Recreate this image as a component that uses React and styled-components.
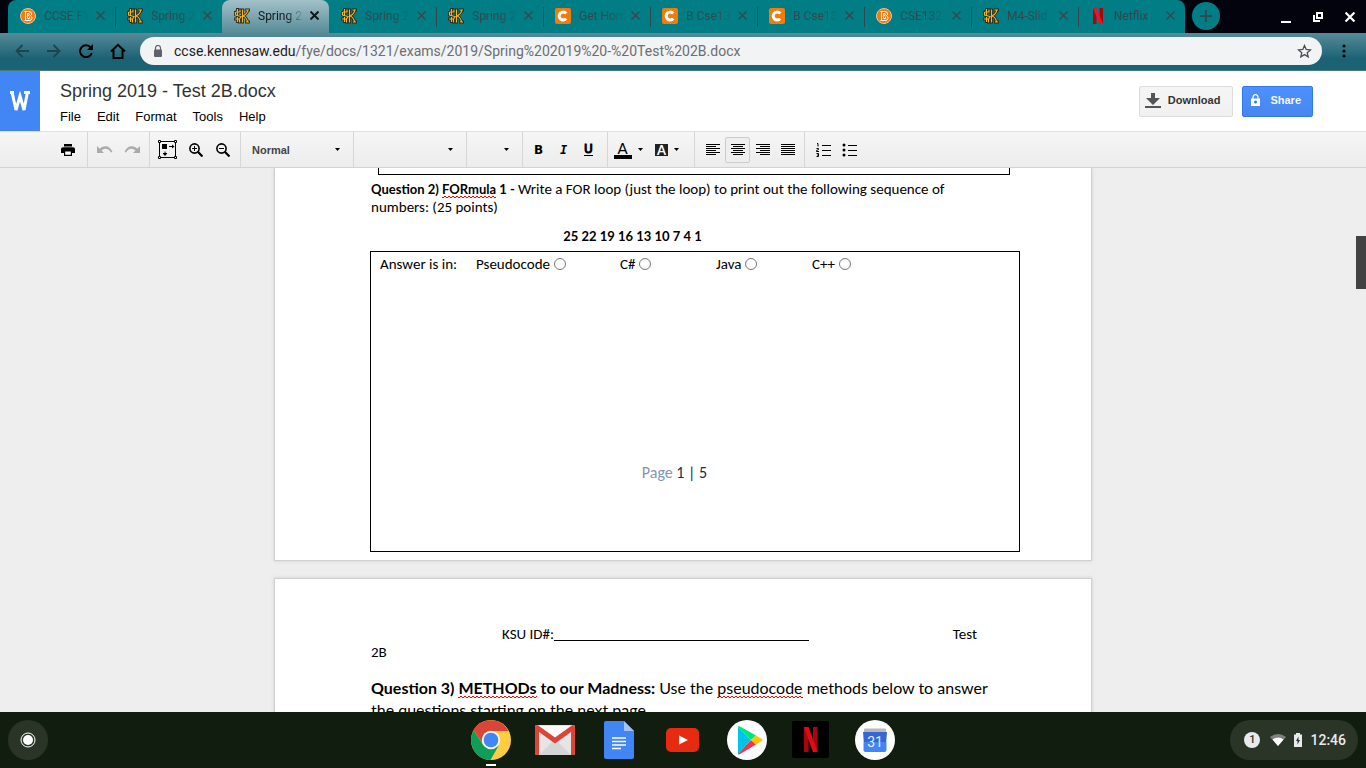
import React from "react";
import styled, { createGlobalStyle, css } from "styled-components";

const Global = createGlobalStyle`
  * { box-sizing: border-box; }
  body { margin: 0; background: #eee; font-family: "Liberation Sans", Arial, sans-serif; }
  button, input, select { font: inherit; margin: 0; }
  button { padding: 0; border: 0; background: none; color: inherit; }
  svg { display: block; flex: none; }
`;

const Screen = styled.div`
  height: 100vh;
  display: flex;
  flex-direction: column;
  overflow: hidden;
`;

/* ---------- browser frame ---------- */

const TabStrip = styled.div`
  display: flex;
  height: 33px;
  flex: none;
  padding-left: 8px;
  background: #02030d;
  font-family: Roboto, sans-serif;
`;

const Tabs = styled.div`
  display: flex;
  flex: 0 1 1177px;
  min-width: 0;
  background: #007d85;
  border-radius: 8px 8px 0 0;
`;

const Tab = styled.div`
  display: flex;
  align-items: center;
  flex: 1 1 0;
  min-width: 0;
  height: 33px;
  padding: 0 7px 2px 12px;
  color: #36474c;
  border-radius: 8px 8px 0 0;
  ${(p) =>
    p.$active &&
    css`
      color: #10181b;
      background: linear-gradient(#a3c1c9, #568b98);
    `}
`;

const Divider = styled.i`
  align-self: center;
  width: 1px;
  height: 20px;
  margin: 0 -1px 0 0;
  background: ${(p) => (p.$hidden ? "transparent" : "#34474d")};
`;

const TabLabel = styled.span`
  flex: 1;
  min-width: 0;
  margin: 0 0 0 8px;
  white-space: nowrap;
  font-size: 12px;
  line-height: 16px;
  mask-image: ${(p) => (p.$whole ? "none" : "linear-gradient(to right, #000 28px, transparent 46px)")};
`;

const CloseButton = styled.button`
  display: grid;
  place-items: center;
  width: 16px;
  height: 16px;
  flex: none;
`;

const NewTab = styled.button`
  display: grid;
  place-items: center;
  width: 28px;
  height: 28px;
  margin: 2px 0 0 7px;
  border-radius: 50%;
  background: #007d85;
  color: #304a4f;
`;

const WindowButtons = styled.div`
  display: flex;
  gap: 16px;
  margin: 9px 8px 0 auto;
  color: #fff;
`;

const NavBar = styled.nav`
  display: flex;
  align-items: center;
  height: 38px;
  flex: none;
  padding: 0 14px 2px;
  background: linear-gradient(#568b98, #1b6274 70%);
  border-bottom: 1px solid #487b7b;
  color: #000;
`;

const NavButton = styled.button`
  display: grid;
  place-items: center;
  width: 16px;
  height: 24px;
  margin-right: 16px;
  color: ${(p) => (p.disabled ? "#1d454f" : "#000")};
`;

const MenuButton = styled(NavButton)`
  margin: 0 0 0 14px;
`;

const Omnibox = styled.div`
  display: flex;
  align-items: center;
  flex: 1;
  height: 28px;
  padding: 0 10px 0 12px;
  margin-left: -2px;
  border-radius: 14px;
  background: #f1f3f4;
  color: #5f6368;
  font-family: Roboto, sans-serif;
  font-size: 14px;
`;

const Url = styled.a`
  flex: 1;
  margin-left: 10px;
  color: #6b6e72;
  text-decoration: none;
  white-space: nowrap;
  overflow: hidden;
  b { font-weight: 400; color: #202124; }
`;

/* ---------- document header ---------- */

const Header = styled.header`
  display: flex;
  height: 60px;
  flex: none;
  background: #fff;
`;

const Logo = styled.div`
  display: grid;
  place-items: center;
  width: 40px;
  background: #4285f4;
`;

const TitleBlock = styled.div`
  flex: 1;
  padding: 10px 0 0 20px;
`;

const Title = styled.h1`
  margin: 0;
  font-size: 18px;
  line-height: 20px;
  font-weight: 400;
  color: #333;
`;

const Menu = styled.div`
  display: flex;
  gap: 16px;
  margin-top: 8px;
  font-size: 13px;
  line-height: 16px;
  color: #000;
`;

const Actions = styled.div`
  display: flex;
  gap: 9px;
  padding: 15px 53px 0 0;
`;

const ActionButton = styled.button`
  display: flex;
  align-items: center;
  height: 31px;
  padding: 0 ${(p) => (p.$primary ? "11px" : "12px")} 3px ${(p) => (p.$primary ? "8px" : "5px")};
  gap: ${(p) => (p.$primary ? "10px" : "7px")};
  border: 1px solid ${(p) => (p.$primary ? "#3079ed" : "#dcdcdc")};
  border-radius: 2px;
  background: ${(p) =>
    p.$primary ? "linear-gradient(#4d90fe, #4787ed)" : "linear-gradient(#f5f5f5, #f1f1f1)"};
  color: ${(p) => (p.$primary ? "#f5f8ff" : "#333")};
  font-size: 11px;
  font-weight: 700;
`;

const Toolbar = styled.div`
  display: flex;
  height: 37px;
  flex: none;
  border-top: 1px solid #e0e0e0;
  border-bottom: 1px solid #d2d2d2;
  background: linear-gradient(#f6f6f6, #ececec);
`;

const Group = styled.div`
  display: flex;
  align-items: center;
  padding: ${(p) => p.$pad || "0 4px"};
  border-right: 1px solid ${(p) => (p.$last ? "transparent" : "#d6d6d6")};
`;

const Tool = styled.button`
  display: flex;
  align-items: center;
  justify-content: center;
  gap: 6px;
  width: ${(p) => p.$width || 25}px;
  height: 26px;
  border: 1px solid ${(p) => (p.$pressed ? "#ccc" : "transparent")};
  border-radius: 2px;
  background: ${(p) => (p.$pressed ? "#eee" : "transparent")};
  color: ${(p) => (p.disabled ? "#aaa" : "#000")};
`;

const Letter = styled.span`
  font-size: 12px;
  line-height: ${(p) => (p.$under ? "11px" : "16px")};
  font-weight: ${(p) => (p.$under ? 400 : 700)};
  -webkit-text-stroke: ${(p) => (p.$under ? "1px #000" : "0")};
  font-style: ${(p) => (p.$italic ? "italic" : "normal")};
  font-family: ${(p) => (p.$italic ? '"DejaVu Sans Mono", monospace' : '"DejaVu Sans", sans-serif')};
  border-bottom: ${(p) => (p.$under ? "1px solid #000" : "0")};
`;

const ColorLetter = styled.span`
  width: 18px;
  padding-top: 1px;
  border-bottom: 4px solid #000;
  font-family: Lato, sans-serif;
  font-size: 15px;
  line-height: 14px;
`;

const MarkLetter = styled.span`
  width: 13px;
  background: #222;
  color: #fff;
  font-family: Lato, sans-serif;
  font-size: 13px;
  font-weight: 700;
  line-height: 12px;
`;

const SelectBox = styled.label`
  display: flex;
  align-items: center;
  width: ${(p) => p.$width}px;
  padding: 0 13px 0 11px;
  border-right: 1px solid #d6d6d6;
`;

const Select = styled.select`
  appearance: none;
  flex: 1;
  min-width: 0;
  border: 0;
  padding: 0;
  background: none;
  color: #444;
  font-size: 11px;
  font-weight: 700;
`;

/* ---------- document ---------- */

const Workspace = styled.main`
  position: relative;
  flex: 1;
  min-height: 0;
  overflow: hidden;
  background: #eee;
  color: #000;
  font-family: Carlito, Lato, sans-serif;
`;

const Page = styled.section`
  width: 818px;
  margin: 0 auto ${(p) => (p.$first ? "17px" : "0")};
  padding: ${(p) => (p.$first ? "0 71px 8px 96px" : "47px 96px")};
  border: 1px solid #d0d0d0;
  border-top-width: ${(p) => (p.$first ? "0" : "1px")};
  background: #fff;
  box-shadow: 0 0 4px rgba(0, 0, 0, 0.12);
`;

const BoxTail = styled.div`
  height: 7px;
  margin: 0 10px 5px 7px;
  border: solid #000;
  border-width: 0 1px 1px;
`;

const Text = styled.p`
  margin: 0;
  font-size: 15px;
  line-height: 18px;
  white-space: nowrap;
  b { font-family: Lato, sans-serif; font-size: 13px; }
`;

const Sequence = styled(Text)`
  padding: 11px 126px 6px 0;
  text-align: center;
`;

const BigText = styled.p`
  margin: 16px 0 0;
  font-family: Lato, sans-serif;
  font-size: 16px;
  line-height: 22px;
  white-space: nowrap;
`;

const Misspelt = styled.span`
  padding-bottom: 1px;
  background:
    linear-gradient(90deg, #f00 50%, transparent 50%) 0 100% / 4px 1px repeat-x,
    linear-gradient(90deg, transparent 50%, #f00 50%) 0 calc(100% - 1px) / 4px 1px repeat-x;
`;

const AnswerBox = styled.fieldset`
  margin: 0 0 0 -1px;
  height: 301px;
  padding: 3px 9px;
  border: 1px solid #000;
`;

const Choices = styled.div`
  display: grid;
  grid-template-columns: 96px 144px 96px 96px 96px;
  font-size: 15px;
  line-height: 18px;
`;

const Choice = styled.label`
  display: flex;
  align-items: center;
  gap: 4px;
`;

const Radio = styled.input`
  appearance: none;
  width: 12px;
  height: 12px;
  border: 1px solid #777;
  border-radius: 50%;
`;

const Footer = styled.p`
  margin: 190px 41px 0 0;
  text-align: center;
  font-size: 16px;
  line-height: 20px;
  color: #222b3a;
  span { color: #8496b0; }
`;

const IdLine = styled.div`
  display: flex;
  padding: 0 18px 0 131px;
  justify-content: space-between;
  font-size: 15px;
  line-height: 17px;
`;

const IdBlank = styled.span`
  display: flex;
  &::after {
    content: "";
    width: 255px;
    margin-bottom: 2px;
    border-bottom: 1px solid #000;
  }
`;

const ScrollThumb = styled.div`
  position: absolute;
  right: 0;
  top: 68px;
  width: 10px;
  height: 53px;
  background: #424242;
`;

/* ---------- shelf ---------- */

const Shelf = styled.footer`
  display: grid;
  grid-template-columns: 1fr auto 1fr;
  align-items: center;
  height: 56px;
  flex: none;
  padding: 0 8px;
  background: #111e0f;
  font-family: Roboto, sans-serif;
`;

const Launcher = styled.button`
  display: grid;
  place-items: center;
  width: 40px;
  height: 40px;
  border-radius: 50%;
  background: #2a3528;
`;

const Apps = styled.div`
  display: flex;
  gap: 24px;
`;

const AppButton = styled.button`
  position: relative;
  display: grid;
  place-items: center;
  width: 40px;
  height: 40px;
  &::after {
    content: "";
    display: ${(p) => (p.$running ? "block" : "none")};
    position: absolute;
    bottom: -6px;
    width: 10px;
    height: 2px;
    background: #fff;
  }
`;

const Status = styled.button`
  justify-self: end;
  display: flex;
  align-items: center;
  height: 40px;
  padding: 0 12px 0 14px;
  border-radius: 20px;
  background: #2a3528;
  color: #e8eaed;
  font-size: 14px;
  font-weight: 500;
`;

const Count = styled.span`
  width: 16px;
  height: 16px;
  margin-right: 10px;
  border-radius: 50%;
  background: #e8eaed;
  color: #2a3528;
  font-size: 11px;
  line-height: 16px;
`;

/* ---------- drawings ---------- */

const Cross = ({ size = 9, w = 1.4 }) => (
  <svg width={size} height={size} viewBox="0 0 9 9" stroke="currentColor" strokeWidth={w} fill="none">
    <path d="M.5.5l8 8M8.500.5l-8 8" />
  </svg>
);

const Caret = () => (
  <svg width="5" height="3" viewBox="0 0 5 3"><path d="M0 0h5L2.500 3z" fill="#000" /></svg>
);

const OwlIcon = () => (
  <svg width="16" height="16" viewBox="0 0 16 16" fill="none" strokeLinecap="square">
    {[["#29271c", 2.8], ["#f5b324", 1.2]].map(([c, w]) => (
      <path key={c} stroke={c} strokeWidth={w}
        d="M8.500 2v12M6 2v2H2.500M1.500 4.500v2.500L7 8.500 5.500 11H1.500M5.500 11v3M3.500 1.500v5M3.500 9.500v4M13.500 2.500C13.500 5.500 11 7 9 8M9 8c2 .5 3.500 2 4.500 5.500M12 2h2.500M12.500 14h2" />
    ))}
  </svg>
);

const BIcon = () => (
  <svg width="16" height="16" viewBox="0 0 16 16">
    <circle cx="8" cy="8" r="7.500" fill="#f07c16" stroke="#f8c290" />
    <g fill="none" stroke="#fff">
      <path d="M4.500 3.500h4.500q2.500 0 2.500 2.200 0 1.500-1 2 1.500.6 1.500 2.500 0 2.300-3 2.300H4.500M5.500 3.500v9M7.500 5.500v5h2M7.500 5.500h1.500v2H7.500M9.500 8.500v2" />
    </g>
  </svg>
);

const CheggIcon = () => (
  <svg width="16" height="16" viewBox="0 0 16 16">
    <rect width="16" height="16" rx="2" fill="#f27c0a" />
    <path d="M11.200 5.400A4 4 0 1 0 11.200 10.600" fill="none" stroke="#fff" strokeWidth="3" />
  </svg>
);

const RibbonIcon = () => (
  <svg width="16" height="16" viewBox="0 0 16 16">
    <path d="M3 0h3.500v16H3zM9.500 0H13v16H9.500z" fill="#a5070f" />
    <path d="M3 0h3.500L13 16H9.500z" fill="#ed1420" />
  </svg>
);

const favicons = { b: BIcon, owl: OwlIcon, c: CheggIcon, n: RibbonIcon };

const tabs = [
  ["b", "CCSE FY"], ["owl", "Spring 2"], ["owl", "Spring 2"], ["owl", "Spring 2"],
  ["owl", "Spring 2"], ["c", "Get Hom"], ["c", "B Cse13"], ["c", "B Cse13"],
  ["b", "CSE132"], ["owl", "M4-Slid"], ["n", "Netflix"],
];

const Lines = ({ kind }) => {
  const inset = { left: [0, 0], center: [2, 2], right: [4, 0], full: [0, 0] }[kind];
  return (
    <svg width="14" height="12" viewBox="0 0 14 12" stroke="#000">
      {[0, 1, 2, 3, 4, 5].map((i) => {
        const short = i % 2 === 1 && kind !== "full";
        const x1 = short ? inset[0] : 0;
        const x2 = short ? (kind === "left" ? 10 : 14 - inset[1]) : 14;
        return <path key={i} d={`M${x1} ${i * 2 + 0.5}H${x2}`} />;
      })}
    </svg>
  );
};

const ListIcon = ({ numbered }) => (
  <svg width="15" height="14" viewBox="0 0 15 14" stroke="#000" fill="none">
    <path d="M6 2.500h9M6 7.500h9M6 12.500h9" />
    {numbered ? (
      <path d="M1 .5h1v3M.500 5.500h2v1l-2 1v1h2.500M.500 10.500h2v3h-2M1 12h1.500" />
    ) : (
      <g fill="#000" stroke="none"><circle cx="2" cy="2" r="1.500" /><circle cx="2" cy="7" r="1.500" /><circle cx="2" cy="12" r="1.500" /></g>
    )}
  </svg>
);

const UndoIcon = ({ flip }) => (
  <svg width="16" height="10" viewBox="0 0 16 10" fill="currentColor">
    <g transform={flip ? "matrix(-1 0 0 1 16 0)" : undefined}>
      <path d="M0 1v7h7L4.500 5.500C8 2.500 12 3.500 14 7.500l1.500-.6C13 1 7.500-.5 2.800 3.800z" />
    </g>
  </svg>
);

const ZoomIcon = ({ plus }) => (
  <svg width="14" height="14" viewBox="0 0 14 14" fill="none" stroke="#000" strokeWidth="1.600">
    <circle cx="5.500" cy="5.500" r="4.600" /><path d="M8.800 8.800l4.700 4.700" strokeWidth="2.200" />
    <path d={plus ? "M3 5.500h5M5.500 3v5" : "M3 5.500h5"} strokeWidth="1" />
  </svg>
);

const FitIcon = () => (
  <svg width="19" height="19" viewBox="0 0 19 19" fill="none" stroke="#000">
    <path d="M1.500 1.500h16v16h-16z" />
    <path d="M.5.500h2v2h-2zM16.500.500h2v2h-2zM.500 16.500h2v2h-2zM16.500 16.500h2v2h-2z" fill="#fff" />
    <path d="M4 4h5v5H4zM14 4.500l2.500 2-2.500 2zM4.800 13.500h4.400L7 16z" fill="#000" stroke="none" />
    <path d="M11 6.500h3M7 11.500v2.500M5 13.500h4" />
  </svg>
);

const PrintIcon = () => (
  <svg width="14" height="12" viewBox="0 0 14 12">
    <path d="M3 0h8v2.500H3zM2 3.300h10a2 2 0 0 1 2 2V9h-3V7H3v2H0V5.300a2 2 0 0 1 2-2z" />
    <path d="M3.600 7h6.800v4.400H3.600z" fill="#fff" stroke="#000" strokeWidth="1.200" />
  </svg>
);

const ChromeIcon = () => (
  <svg width="40" height="40" viewBox="0 0 40 40">
    <circle cx="20" cy="20" r="20" fill="#ffcd40" />
    <path d="M2.700 10A20 20 0 0 0 19.500 40L28 25 20 29 12 24.500z" fill="#0f9d58" />
    <path d="M2.700 10A20 20 0 0 1 37.500 11H20a9 9 0 0 0-8 13z" fill="#db4437" />
    <circle cx="20" cy="20" r="9.200" fill="#f4f4f4" /><circle cx="20" cy="20" r="7.300" fill="#4285f4" />
  </svg>
);

const GmailIcon = () => (
  <svg width="40" height="30" viewBox="0 0 40 30">
    <rect width="40" height="30" rx="2" fill="#e5e5e5" />
    <path d="M4 30L20 14l16 16z" fill="#d5d5d5" /><path d="M4 1h32L20 13z" fill="#fafafa" />
    <path d="M0 2Q0 0 2.500 0L20 12.500 37.500 0Q40 0 40 2v26q0 2-2 2h-2V7L20 18.500 4 7v23H2q-2 0-2-2z" fill="#db4437" />
  </svg>
);

const DocsIcon = () => (
  <svg width="30" height="38" viewBox="0 0 30 38">
    <path d="M2 0h18l10 10v26q0 2-2 2H2q-2 0-2-2V2Q0 0 2 0z" fill="#4285f4" />
    <path d="M20 0l10 10H20z" fill="#a1c2fa" />
    <path d="M8 17h14M8 20.500h14M8 24h14M8 27.500h9" stroke="#fff" strokeWidth="1.700" />
  </svg>
);

const TubeIcon = () => (
  <svg width="34" height="24" viewBox="0 0 34 24">
    <rect width="33" height="24" rx="5" fill="#e62b10" /><path d="M13 7.500l9 4.500-9 4.500z" fill="#fff" />
  </svg>
);

const PlayIcon = () => (
  <svg width="40" height="40" viewBox="0 0 40 40">
    <circle cx="20" cy="20" r="20" fill="#fff" />
    <path d="M11 7v27l13-14z" fill="#00c3ea" />
    <path d="M11 7q.5-1.500 2-.5L29 15.500 24 20z" fill="#00e676" />
    <path d="M11 34q.5 1 2 0l16-9.500L24 20z" fill="#f43249" />
    <path d="M29 15.500l6 3.500q1 1 0 2l-6 3.500-5-4.500z" fill="#ffc400" />
  </svg>
);

const NetflixIcon = () => (
  <svg width="38" height="38" viewBox="0 0 38 38">
    <rect width="37" height="37" rx="2" fill="#000" />
    <path d="M12 6h4.500v25H12zM21 6h4.500v25H21z" fill="#a5070f" />
    <path d="M12 6h4.500l9 25H21z" fill="#e50914" />
  </svg>
);

const CalendarIcon = () => (
  <svg width="40" height="40" viewBox="0 0 40 40">
    <circle cx="20" cy="20" r="20" fill="#fff" />
    <rect x="9" y="8.500" width="22" height="4" rx="1" fill="#b8b8b8" />
    <path d="M8 12h24l-.8 10H8.800z" fill="#3367d6" /><path d="M8.500 22h23v8q0 2-2 2h-19q-2 0-2-2z" fill="#4285f4" />
    <text x="20" y="27" fill="#e8f0ff" fontFamily="Roboto, sans-serif" fontSize="14" textAnchor="middle">31</text>
  </svg>
);

const apps = [
  ["Chrome", ChromeIcon], ["Gmail", GmailIcon], ["Docs", DocsIcon], ["YouTube", TubeIcon],
  ["Play Store", PlayIcon], ["Netflix", NetflixIcon], ["Calendar", CalendarIcon],
];

function BrowserFrame() {
  return (
    <>
      <TabStrip>
        <Tabs>
          {tabs.map(([icon, label], i) => {
            const Icon = favicons[icon];
            return (
              <React.Fragment key={i}>
                {i > 0 && <Divider $hidden={i === 2 || i === 3} />}
                <Tab $active={i === 2}>
                  <Icon />
                  <TabLabel $whole={label === "Netflix"}>{label}</TabLabel>
                  <CloseButton aria-label="Close tab"><Cross w={i === 2 ? 2 : 1.4} /></CloseButton>
                </Tab>
              </React.Fragment>
            );
          })}
        </Tabs>
        <NewTab aria-label="New tab">
          <svg width="12" height="12" stroke="currentColor" strokeWidth="2"><path d="M0 6h12M6 0v12" /></svg>
        </NewTab>
        <WindowButtons>
          <CloseButton aria-label="Minimize"><svg width="10" height="14"><path d="M0 11h10v2H0z" fill="#fff" /></svg></CloseButton>
          <CloseButton aria-label="Restore">
            <svg width="10" height="10" fill="none" stroke="#fff" strokeWidth="2"><path d="M4 1h5v5H4zM1 3v6h6" /></svg>
          </CloseButton>
          <CloseButton aria-label="Close"><Cross size={10} w={2} /></CloseButton>
        </WindowButtons>
      </TabStrip>
      <NavBar>
        <NavButton disabled aria-label="Back">
          <svg width="14" height="14" fill="none" stroke="currentColor" strokeWidth="1.800"><path d="M14 7H2M7.500 1L1.500 7l6 6" /></svg>
        </NavButton>
        <NavButton disabled aria-label="Forward">
          <svg width="14" height="14" fill="none" stroke="currentColor" strokeWidth="1.800"><path d="M0 7h12M6.500 1l6 6-6 6" /></svg>
        </NavButton>
        <NavButton aria-label="Reload">
          <svg width="14" height="14" fill="none" stroke="currentColor" strokeWidth="2"><path d="M11.800 3.500A6 6 0 1 0 12.800 9" /><path d="M14 0v6H8z" fill="currentColor" stroke="none" /></svg>
        </NavButton>
        <NavButton aria-label="Home">
          <svg width="16" height="16" fill="none" stroke="currentColor" strokeWidth="2"><path d="M1 8.500L8 1.800l7 6.700M3.500 7v8h9V7" /></svg>
        </NavButton>
        <Omnibox>
          <svg width="12" height="12" viewBox="0 0 12 12"><rect x="2" y="4.500" width="8" height="7.500" rx="1" fill="#5f6368" /><path d="M3.500 5V3a2.500 2.500 0 0 1 5 0v2" fill="none" stroke="#5f6368" strokeWidth="1.200" /></svg>
          <Url href="#"><b>ccse.kennesaw.edu</b>/fye/docs/1321/exams/2019/Spring%202019%20-%20Test%202B.docx</Url>
          <svg width="15" height="14" viewBox="0 0 15 14" fill="none" stroke="#4b4f53" strokeWidth="1.300"><path d="M7.500 1.500l1.700 4 4.300.4-3.300 2.800 1 4.200-3.700-2.300-3.700 2.300 1-4.200L1.500 5.900l4.300-.4z" /></svg>
        </Omnibox>
        <MenuButton aria-label="Menu">
          <svg width="4" height="14" viewBox="0 0 4 14"><circle cx="2" cy="2" r="1.600" /><circle cx="2" cy="7" r="1.600" /><circle cx="2" cy="12" r="1.600" /></svg>
        </MenuButton>
      </NavBar>
    </>
  );
}

function DocHeader() {
  return (
    <Header>
      <Logo>
        <svg width="20" height="21" viewBox="0 0 20 21" fill="none" stroke="#fff" strokeWidth="3"><path d="M2 1l4 18L10 5l4 14L17.500 1M0 1.500h4M14 1.500h6" /></svg>
      </Logo>
      <TitleBlock>
        <Title>Spring 2019 - Test 2B.docx</Title>
        <Menu>{["File", "Edit", "Format", "Tools", "Help"].map((m) => <button key={m}>{m}</button>)}</Menu>
      </TitleBlock>
      <Actions>
        <ActionButton>
          <svg width="16" height="15" fill="#555"><path d="M6 0h4v5h5L8 12 1 5h5zM0 13h16v2H0z" /></svg>
          Download
        </ActionButton>
        <ActionButton $primary>
          <svg width="9" height="12" viewBox="0 0 9 12"><path d="M0 4.500h9V12H0z" fill="#fff" /><path d="M2 5V3.200a2.500 2.500 0 0 1 5 0V5" fill="none" stroke="#fff" strokeWidth="1.200" /><circle cx="4.500" cy="8" r="1.500" fill="#3079ed" /></svg>
          Share
        </ActionButton>
      </Actions>
    </Header>
  );
}

function FormatBar() {
  return (
    <Toolbar>
      <Group $pad="0 7px 0 55px"><Tool aria-label="Print"><PrintIcon /></Tool></Group>
      <Group>
        <Tool $width={26} disabled aria-label="Undo"><UndoIcon /></Tool>
        <Tool $width={27} disabled aria-label="Redo"><UndoIcon flip /></Tool>
      </Group>
      <Group>
        <Tool $width={27} aria-label="Fit"><FitIcon /></Tool>
        <Tool $width={29} aria-label="Zoom in"><ZoomIcon plus /></Tool>
        <Tool $width={26} aria-label="Zoom out"><ZoomIcon /></Tool>
      </Group>
      <SelectBox $width={113}><Select aria-label="Style"><option>Normal</option></Select><Caret /></SelectBox>
      <SelectBox $width={113}><Select aria-label="Font"><option></option></Select><Caret /></SelectBox>
      <SelectBox $width={56}><Select aria-label="Size"><option></option></Select><Caret /></SelectBox>
      <Group $pad="0 6px 0 3px">
        <Tool aria-label="Bold"><Letter>B</Letter></Tool>
        <Tool aria-label="Italic"><Letter $italic>I</Letter></Tool>
        <Tool aria-label="Underline"><Letter $under>U</Letter></Tool>
      </Group>
      <Group $pad="0 5px 0 3px">
        <Tool $width={34} aria-label="Text color"><ColorLetter>A</ColorLetter><Caret /></Tool>
        <Tool $width={44} aria-label="Highlight color"><MarkLetter>A</MarkLetter><Caret /></Tool>
      </Group>
      <Group $pad="0 4px 0 5px">
        <Tool aria-label="Align left"><Lines kind="left" /></Tool>
        <Tool $pressed aria-label="Align center"><Lines kind="center" /></Tool>
        <Tool aria-label="Align right"><Lines kind="right" /></Tool>
        <Tool aria-label="Justify"><Lines kind="full" /></Tool>
      </Group>
      <Group $last $pad="0 4px 0 5px">
        <Tool $width={26} aria-label="Numbered list"><ListIcon numbered /></Tool>
        <Tool $width={26} aria-label="Bulleted list"><ListIcon /></Tool>
      </Group>
    </Toolbar>
  );
}

export default function App() {
  return (
    <Screen>
      <Global />
      <BrowserFrame />
      <DocHeader />
      <FormatBar />
      <Workspace>
        <Page $first>
          <BoxTail />
          <Text>
            <b>Question 2) <Misspelt>FORmula</Misspelt> 1 - </b>
            Write a FOR loop (just the loop) to print out the following sequence of<br />numbers: (25 points)
          </Text>
          <Sequence><b>25 22 19 16 13 10 7 4 1</b></Sequence>
          <AnswerBox>
            <Choices>
              <span>Answer is in:</span>
              {["Pseudocode", "C#", "Java", "C++"].map((name) => (
                <Choice key={name}>{name}<Radio type="radio" name="language" /></Choice>
              ))}
            </Choices>
            <Footer><span>Page</span> 1 | 5</Footer>
          </AnswerBox>
        </Page>
        <Page>
          <IdLine><IdBlank>KSU ID#:</IdBlank><span>Test</span></IdLine>
          <Text>2B</Text>
          <BigText>
            <b>Question 3) <Misspelt>METHODs</Misspelt> to our Madness:</b> Use the <Misspelt>pseudocode</Misspelt> methods below to answer<br />
            the questions starting on the next page.
          </BigText>
        </Page>
        <ScrollThumb />
      </Workspace>
      <Shelf>
        <Launcher aria-label="Launcher">
          <svg width="16" height="16" viewBox="0 0 16 16"><circle cx="8" cy="8" r="7" fill="none" stroke="#fff" /><circle cx="8" cy="8" r="5" fill="#fff" /></svg>
        </Launcher>
        <Apps>
          {apps.map(([name, Icon], i) => <AppButton key={name} $running={i === 0} aria-label={name}><Icon /></AppButton>)}
        </Apps>
        <Status aria-label="Status">
          <Count>1</Count>
          <svg width="16" height="12" viewBox="0 0 16 12"><path d="M0 3q8-6 16 0L8 12z" fill="#7b837a" /><path d="M2.500 5.500q5.500-4 11 0L8 12z" fill="#fff" /></svg>
          <svg width="24" height="14" viewBox="2 0 24 14"><path d="M12 0h4v1.500h2V14h-8V1.500h2z" fill="#e8eaed" /><path d="M14.500 3.500L12 8h1.500v3.500L16 7h-1.500z" fill="#2a3528" /></svg>
          12:46
        </Status>
      </Shelf>
    </Screen>
  );
}
